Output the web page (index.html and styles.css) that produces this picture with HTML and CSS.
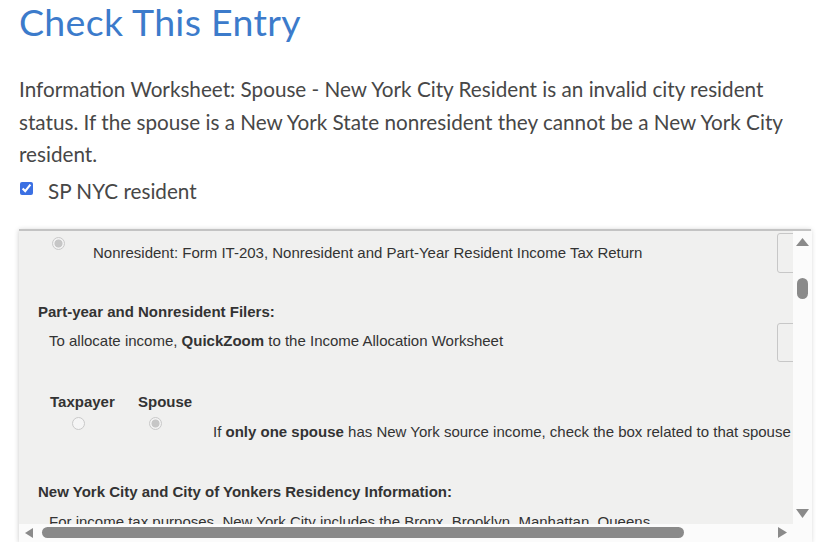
FILE: index.html
```html
<!DOCTYPE html>
<html lang="en">
<head>
<meta charset="utf-8">
<title>Check This Entry</title>
<link rel="stylesheet" href="styles.css">
</head>
<body>
<main class="page">
  <h1 class="title">Check This Entry</h1>
  <p class="message">Information Worksheet: Spouse - New York City Resident is an invalid city resident status. If the spouse is a New York State nonresident they cannot be a New York City resident.</p>
  <label class="check-row">
    <input type="checkbox" class="check" checked>
    <span class="check-label">SP NYC resident</span>
  </label>

  <section class="panel">
    <div class="viewport">
      <div class="form">
        <div class="row row-first">
          <input type="radio" class="radio" disabled checked>
          <span class="row-text wide">Nonresident: Form IT-203, Nonresident and Part-Year Resident Income Tax Return</span>
          <span class="field"></span>
        </div>

        <div class="heading h-first">Part-year and Nonresident Filers:</div>

        <div class="row row-alloc">
          <span class="row-text alloc">To allocate income, <b>QuickZoom</b> to the Income Allocation Worksheet</span>
          <span class="field field-2"></span>
        </div>

        <div class="row row-who">
          <div class="opt opt-tp">
            <span class="opt-label">Taxpayer</span>
            <input type="radio" class="radio" disabled>
          </div>
          <div class="opt opt-sp">
            <span class="opt-label">Spouse</span>
            <input type="radio" class="radio" disabled checked>
          </div>
          <span class="row-text who-text">If <b>only one spouse</b> has New York source income, check the box related to that spouse</span>
        </div>

        <div class="heading h-second">New York City and City of Yonkers Residency Information:</div>

        <p class="para">For income tax purposes, New York City includes the Bronx, Brooklyn, Manhattan, Queens, and Staten Island.</p>
      </div>
    </div>

    <div class="vbar">
      <svg class="arrow" width="13" height="8" viewBox="0 0 13 8"><polygon points="6.5,0 13,8 0,8" fill="#8a8a8a"/></svg>
      <span class="vthumb"></span>
      <span class="spacer"></span>
      <svg class="arrow" width="13" height="9" viewBox="0 0 13 9"><polygon points="0,0 13,0 6.5,9" fill="#8a8a8a"/></svg>
    </div>

    <div class="hbar">
      <svg class="arrow" width="8" height="10" viewBox="0 0 8 10"><polygon points="8,0 8,10 0,5" fill="#8a8a8a"/></svg>
      <span class="hthumb"></span>
      <span class="spacer"></span>
      <svg class="arrow" width="9" height="11" viewBox="0 0 9 11"><polygon points="0,0 9,5.5 0,11" fill="#8a8a8a"/></svg>
    </div>
    <div class="corner"></div>
  </section>
</main>
</body>
</html>
```

FILE: styles.css
```css
html, body {
  margin: 0;
  padding: 0;
  background: #ffffff;
}

.page {
  padding: 0 19px;
  font-family: "Lato", "Open Sans", sans-serif;
}

.title {
  margin: 0;
  font-family: "Lato", sans-serif;
  font-weight: 400;
  font-size: 37.5px;
  line-height: 44px;
  color: #3c7bcb;
  letter-spacing: 0.3px;
}

.message {
  margin: 29px 0 0;
  font-size: 20.7px;
  line-height: 32.5px;
  color: #474747;
}

.check-row {
  display: flex;
  align-items: flex-start;
  margin-top: 2px;
  height: 32px;
}

.check {
  width: 13px;
  height: 13px;
  margin: 9px 0 0 1px;
  accent-color: #3b70e3;
}

.check-label {
  margin-left: 15px;
  margin-top: 2px;
  font-size: 20.7px;
  line-height: 32px;
  color: #474747;
}

.panel {
  margin-top: 24px;
  display: grid;
  grid-template-columns: 774px 19px;
  grid-template-rows: 293px 18px;
  border-top: 2px solid #c3c3c3;
  box-shadow: 0 1px 5px rgba(0, 0, 0, 0.22);
  background: #fbfbfb;
}

.viewport {
  overflow: hidden;
  background: #f0f0ef;
  font-family: "Liberation Sans", Arial, sans-serif;
  font-size: 15px;
  color: #333333;
}

.form {
  width: 1100px;
}

.row {
  display: flex;
  align-items: flex-start;
}

.row-text {
  line-height: 16px;
  white-space: nowrap;
}

.radio {
  appearance: none;
  -webkit-appearance: none;
  box-sizing: border-box;
  width: 13px;
  height: 13px;
  margin: 0;
  border: 1px solid #c9c9c9;
  border-radius: 50%;
  background: #f5f5f5;
}

.radio:checked {
  background: radial-gradient(circle, #c6c6c6 0, #c6c6c6 3.6px, #f2f2f2 4.4px);
}

.field {
  display: block;
  box-sizing: border-box;
  width: 60px;
  height: 40px;
  border: 1px solid #c7c7c7;
  border-radius: 3px;
  background: #f0f0ef;
}

.row-first {
  padding-left: 33px;
}

.row-first .radio {
  margin-top: 6px;
}

.row-first .wide {
  margin-left: 28px;
  margin-top: 14px;
  width: 684px;
}

.row-first .field {
  margin-top: 2px;
}

.heading {
  padding-left: 19px;
  font-weight: 700;
  line-height: 16px;
  white-space: nowrap;
}

.h-first {
  margin-top: 31px;
}

.row-alloc {
  margin-top: 3px;
  padding-left: 30px;
}

.row-alloc .alloc {
  width: 728px;
  margin-top: 10px;
}

.field-2 {
  height: 39px;
}

.row-who {
  margin-top: 32px;
  padding-left: 31px;
}

.opt {
  display: flex;
  flex-direction: column;
  align-items: flex-start;
}

.opt-label {
  font-weight: 700;
  line-height: 16px;
}

.opt .radio {
  margin-top: 7px;
}

.opt-tp {
  width: 88px;
}

.opt-tp .radio {
  margin-left: 22px;
}

.opt-sp {
  width: 75px;
}

.opt-sp .radio {
  margin-left: 11px;
}

.who-text {
  margin-top: 30px;
}

.h-second {
  margin-top: 44px;
}

.para {
  width: 615px;
  margin: 14px 0 0 30px;
  line-height: 16px;
}

.vbar {
  grid-column: 2;
  grid-row: 1;
  display: flex;
  flex-direction: column;
  align-items: center;
  padding: 7px 0 6px;
  background: #fbfbfb;
}

.arrow {
  display: block;
  flex: none;
}

.vthumb {
  display: block;
  width: 11px;
  height: 21px;
  margin-top: 32px;
  border-radius: 6px;
  background: #8a8a8a;
}

.spacer {
  flex: 1;
}

.hbar {
  grid-column: 1;
  grid-row: 2;
  display: flex;
  align-items: center;
  padding: 0 6px;
  background: #fbfbfb;
}

.hthumb {
  display: block;
  width: 642px;
  height: 11px;
  margin-left: 9px;
  border-radius: 6px;
  background: #8a8a8a;
}

.corner {
  grid-column: 2;
  grid-row: 2;
  background: #fbfbfb;
}
```
